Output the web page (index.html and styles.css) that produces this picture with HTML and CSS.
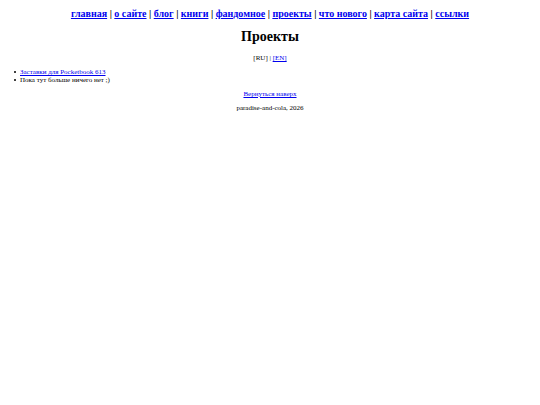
FILE: index.html
```
<!DOCTYPE html>
<html lang="ru">
<head>
  <meta charset="UTF-8">
  <title>Проекты</title>
  <link rel="stylesheet" href="styles.css">
</head>
<body>
  <nav id="top">
    <a href="#">главная</a> |
    <a href="#">о сайте</a> |
    <a href="#">блог</a> |
    <a href="#">книги</a> |
    <a href="#">фандомное</a> |
    <a href="#">проекты</a> |
    <a href="#">что нового</a> |
    <a href="#">карта сайта</a> |
    <a href="#">ссылки</a>
  </nav>

  <h1>Проекты</h1>

  <p class="center">[RU] | <a href="#">[EN]</a></p>

  <ul>
    <li><a href="#">Заставки для Pocketbook 613</a></li>
    <li>Пока тут больше ничего нет ;)</li>
  </ul>

  <p class="center"><a href="#top">Вернуться наверх</a></p>

  <footer class="center">paradise-and-cola, 2026</footer>
</body>
</html>
```
FILE: styles.css
```
body {
  font-family: "Liberation Serif", "Times New Roman", serif;
  font-size: 7px;
  line-height: 8px;
  margin: 8px 4px;
  background-color: white;
  color: black;
}
a {
  color: #0000ee;
}
nav {
  font-size: 10px;
  line-height: 12px;
  font-weight: bold;
  text-align: center;
}
h1 {
  font-size: 14px;
  line-height: 16px;
  margin: 9px 0;
  text-align: center;
}
ul {
  margin: 6px 0;
  padding-left: 10px;
  list-style: none;
}
li {
  display: flex;
  align-items: center;
}
li::before {
  content: "";
  width: 2px;
  height: 2px;
  margin-right: 4px;
  border-radius: 50%;
  background-color: black;
}
p {
  margin: 6px 0;
}
.center {
  text-align: center;
}
```
